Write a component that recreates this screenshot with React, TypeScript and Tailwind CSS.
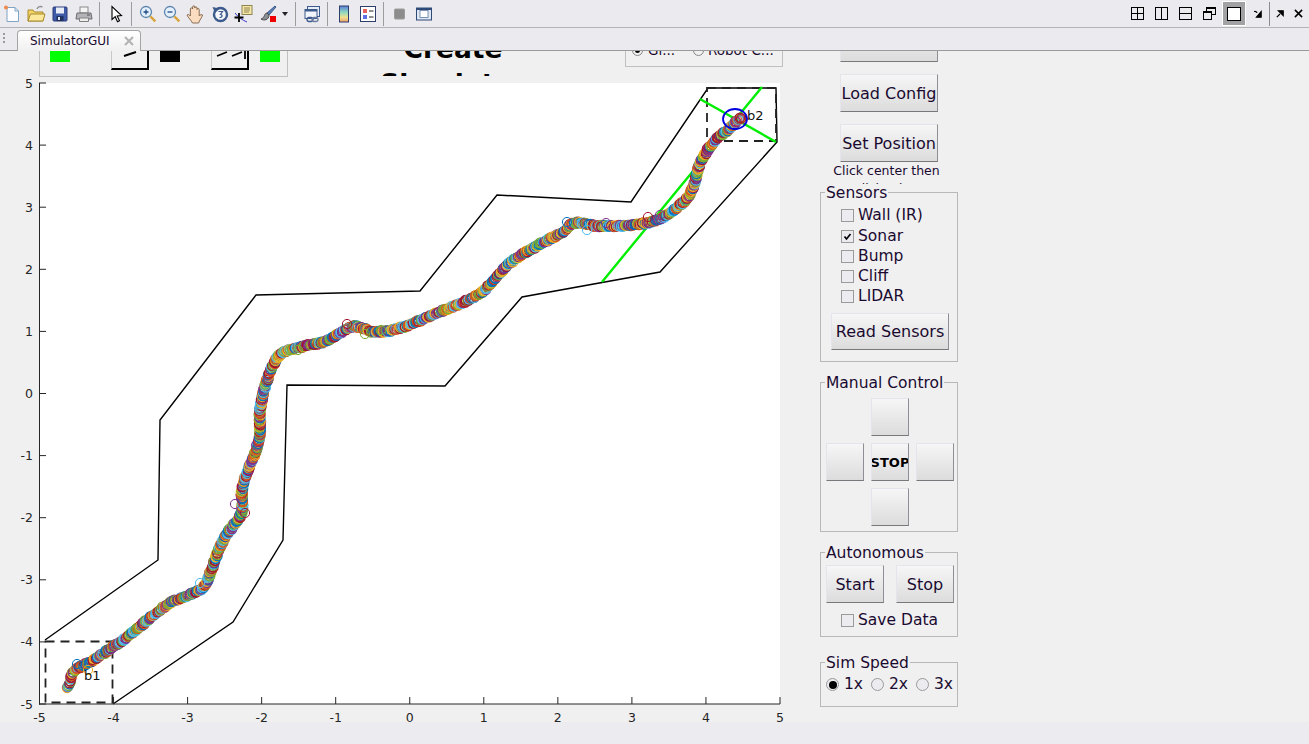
import React from "react";

const font = { fontFamily: '"DejaVu Sans", sans-serif' };

const trace: [number, number][] = [
  [68, 687], [71, 678], [75, 670], [93, 660], [123, 640], [150, 618], [170, 603], [193, 593], [205, 585],
  [215, 560], [225, 537], [241, 514], [242, 490], [247, 473], [257, 447], [260, 430], [260, 410], [265, 387],
  [272, 367], [282, 353], [300, 347], [323, 342], [337, 335], [350, 327], [360, 327], [375, 332], [400, 328],
  [440, 312], [480, 293], [510, 263], [533, 248], [563, 232], [575, 223], [600, 226], [633, 225], [657, 220],
  [677, 208], [692, 190], [700, 163], [713, 143], [730, 128], [741, 117],
];

const matlabColors = ["#0072BD", "#D95319", "#EDB120", "#7E2F8E", "#77AC30", "#4DBEEE", "#A2142F"];

const outliers: [number, number, string][] = [
  [77, 664, "#0072BD"], [88, 670, "#EDB120"], [200, 583, "#4DBEEE"], [235, 504, "#7E2F8E"], [245, 513, "#A2142F"],
  [298, 350, "#77AC30"], [365, 334, "#77AC30"], [381, 330, "#77AC30"], [347, 324, "#A2142F"], [567, 222, "#0072BD"],
  [587, 230, "#4DBEEE"], [606, 223, "#7E2F8E"], [648, 217, "#A2142F"], [660, 215, "#7E2F8E"],
];

function buildPoints() {
  const pts: { x: number; y: number; c: string }[] = [];
  let seed = 7;
  const rnd = () => {
    seed = (seed * 16807) % 2147483647;
    return seed / 2147483647;
  };
  for (let i = 0; i < trace.length - 1; i++) {
    const p0 = trace[Math.max(i - 1, 0)];
    const p1 = trace[i];
    const p2 = trace[i + 1];
    const p3 = trace[Math.min(i + 2, trace.length - 1)];
    const dist = Math.hypot(p2[0] - p1[0], p2[1] - p1[1]);
    const n = Math.max(2, Math.round(dist / 0.8));
    for (let j = 0; j < n; j++) {
      const t = j / n;
      const t2 = t * t;
      const t3 = t2 * t;
      const x = 0.5 * (2 * p1[0] + (p2[0] - p0[0]) * t + (2 * p0[0] - 5 * p1[0] + 4 * p2[0] - p3[0]) * t2 + (3 * p1[0] - p0[0] - 3 * p2[0] + p3[0]) * t3);
      const y = 0.5 * (2 * p1[1] + (p2[1] - p0[1]) * t + (2 * p0[1] - 5 * p1[1] + 4 * p2[1] - p3[1]) * t2 + (3 * p1[1] - p0[1] - 3 * p2[1] + p3[1]) * t3);
      pts.push({ x: x + (rnd() - 0.5) * 2, y: y + (rnd() - 0.5) * 2, c: matlabColors[Math.floor(rnd() * 7)] });
    }
  }
  return pts;
}

const points = buildPoints();
const xTicks = [-5, -4, -3, -2, -1, 0, 1, 2, 3, 4, 5];
const yPos = (v: number) => 83 + (5 - v) * 62.1;
const xPos = (v: number) => 39.5 + (v + 5) * 74.05;

function Plot() {
  return (
    <svg width="800" height="639" viewBox="0 83 800 639" className="block overflow-visible" style={font}>
      <rect x="39" y="83" width="741" height="621" fill="#ffffff" />
      <polyline points="45,640 158,560 160,420 256,295 420,291 497,195 631,202 708,88 776,88 777,142 660,272 522,297 445,386 287,385 283,540 233,622 113,704" fill="none" stroke="#000" strokeWidth="1.4" />
      <rect x="45.5" y="641.5" width="67" height="61" fill="none" stroke="#222" strokeWidth="1.8" strokeDasharray="9 6" />
      <rect x="707" y="88" width="69" height="53" fill="none" stroke="#222" strokeWidth="1.8" strokeDasharray="9 6" />
      <line x1="602" y1="282" x2="762" y2="87" stroke="#00ee00" strokeWidth="2.4" />
      <line x1="700" y1="99" x2="776" y2="142" stroke="#00ee00" strokeWidth="2.4" />
      {points.map((p, i) => (
        <circle key={i} cx={p.x} cy={p.y} r="4.7" fill="none" stroke={p.c} strokeWidth="1.2" />
      ))}
      {outliers.map(([x, y, c], i) => (
        <circle key={i} cx={x} cy={y} r="4.6" fill="none" stroke={c} strokeWidth="1" />
      ))}
      <ellipse cx="735" cy="119" rx="12" ry="10" fill="none" stroke="#0000e0" strokeWidth="1.8" />
      <text x="747" y="120" fontSize="13" fill="#111">b2</text>
      <text x="84" y="680" fontSize="13" fill="#111">b1</text>
      <line x1="39.5" y1="83" x2="39.5" y2="704.5" stroke="#262626" strokeWidth="1" />
      <line x1="39" y1="704" x2="780" y2="704" stroke="#262626" strokeWidth="1" />
      {xTicks.map((v) => (
        <g key={v}>
          <line x1={xPos(v)} y1="704" x2={xPos(v)} y2="697" stroke="#262626" />
          <line x1="39" y1={yPos(v)} x2="46" y2={yPos(v)} stroke="#262626" />
          <text x={xPos(v)} y="722" fontSize="12.5" fill="#262626" textAnchor="middle">
            {v}
          </text>
          <text x="33" y={yPos(v) + 4.5} fontSize="12.5" fill="#262626" textAnchor="end">
            {v}
          </text>
        </g>
      ))}
    </svg>
  );
}

const Cell = ({ w = "w-6", children }: { w?: string; children: React.ReactNode }) => (
  <div className={`${w} h-7 flex items-center justify-center shrink-0`}>{children}</div>
);

const Sep = ({ className }: { className: string }) => <div className={`w-px h-6 bg-[#9c9c9c] shrink-0 ${className}`} />;

const Ico = ({ children }: { children: React.ReactNode }) => (
  <svg width="20" height="20" viewBox="0 0 20 20" fill="none">
    {children}
  </svg>
);

const LayoutIcon = ({ children }: { children: React.ReactNode }) => (
  <svg width="14" height="14" viewBox="0 0 14 14" fill="none" stroke="#000" strokeWidth="1.2" shapeRendering="crispEdges">
    {children}
  </svg>
);

function Toolbar() {
  return (
    <div className="h-[28px] flex items-center bg-[#ebeaee] border-b border-[#b4b4b4] pr-[3px] shrink-0">
      <Cell>
        <Ico>
          <path d="M5 3.5h8l3.5 3.5v10.5H5z" fill="#fdfdff" stroke="#7fa4c4" />
          <path d="M13 3.5V7h3.5" stroke="#7fa4c4" />
          <circle cx="4" cy="3.5" r="2" fill="#f08a4b" />
        </Ico>
      </Cell>
      <Cell>
        <Ico>
          <path d="M2 6h5l1.5 2H17v9H2z" fill="#f3d266" stroke="#a78a2c" />
          <path d="M2 17l2.5-7H19l-2 7z" fill="#fbe89a" stroke="#a78a2c" />
          <path d="M11 5c1-2.5 3.5-3 5.5-2" stroke="#8d8d8d" strokeWidth="1.3" />
        </Ico>
      </Cell>
      <Cell>
        <Ico>
          <rect x="3" y="3" width="14" height="14" rx="1" fill="#3f5ba8" stroke="#2a3b78" />
          <rect x="6" y="3.5" width="8" height="6" fill="#e8ecf6" />
          <rect x="6.5" y="12" width="7" height="5" fill="#20305f" />
          <rect x="8" y="13" width="2" height="3" fill="#dfe4f0" />
        </Ico>
      </Cell>
      <Cell>
        <Ico>
          <rect x="6" y="3" width="8" height="6" fill="#f4f4f4" stroke="#8a8a8a" />
          <path d="M3 9h14l1 6H2z" fill="#b4b4b8" stroke="#6c6c70" />
          <path d="M5.5 14h9v3.5h-9z" fill="#eeeeee" stroke="#808080" />
          <path d="M13 11h3" stroke="#555" />
        </Ico>
      </Cell>
      <Sep className="ml-[3px] mr-[5px]" />
      <Cell>
        <Ico>
          <path d="M5 2.5v13l3.2-2.8 2.3 5 2-1-2.3-4.8 4.3-.4z" fill="#fff" stroke="#000" strokeWidth="1.1" />
        </Ico>
      </Cell>
      <Sep className="ml-[2px] mr-[4px]" />
      <Cell>
        <Ico>
          <circle cx="8" cy="8" r="5.5" fill="#e4f0fb" stroke="#5f86ae" strokeWidth="1.3" />
          <path d="M5.5 8h5M8 5.5v5" stroke="#234a86" strokeWidth="1.3" />
          <path d="M12.3 12.3l5 5" stroke="#d8a33a" strokeWidth="2.4" />
        </Ico>
      </Cell>
      <Cell>
        <Ico>
          <circle cx="8" cy="8" r="5.5" fill="#e4f0fb" stroke="#5f86ae" strokeWidth="1.3" />
          <path d="M5.5 8h5" stroke="#234a86" strokeWidth="1.3" />
          <path d="M12.3 12.3l5 5" stroke="#d8a33a" strokeWidth="2.4" />
        </Ico>
      </Cell>
      <Cell>
        <svg width="20" height="20" viewBox="0 0 20 20">
          <path d="M6.5 19c-1-2.3-4.500-5.500-5.500-8 .6-1.200 2.400-.4 3.400 1V5c0-1.600 2.200-1.600 2.200 0V3c0-1.600 2.200-1.600 2.200 0v1c0-1.600 2.200-1.600 2.200 0v1.500c0-1.400 2.200-1.400 2.200 0V12c.8-1.200 2.800-2 3.400-1-.5 2.200-3.300 5.500-4 8z" fill="#fbdcc0" stroke="#7d6247" strokeWidth="0.9" />
        </svg>
      </Cell>
      <Cell>
        <Ico>
          <circle cx="10.5" cy="10.5" r="6.5" fill="#f4f6fa" stroke="#3c5a8c" strokeWidth="2.4" />
          <path d="M2.5 3l2.5 6L9.5 4.500z" fill="#3c5a8c" />
          <path d="M8.5 7.500h4l-2 3c2 0 2.500 3-1 3" stroke="#3c5a8c" strokeWidth="1.2" />
        </Ico>
      </Cell>
      <Cell>
        <Ico>
          <rect x="8" y="1.5" width="10" height="9" fill="#f4e7a8" stroke="#8e8450" />
          <path d="M10 4h6M10 6h6M10 8h5" stroke="#8e8450" />
          <path d="M1 9c3 4 7 7 12 9" stroke="#2222cc" strokeWidth="0.9" />
          <path d="M5 9v9M0.5 13.5h9" stroke="#000" strokeWidth="1.8" />
        </Ico>
      </Cell>
      <Cell>
        <Ico>
          <path d="M17 2l-8 7 2 2 7-8z" fill="#5a7fb4" stroke="#3c5a8c" />
          <path d="M9 9c-3 0-2 5-6 6 3 2 8 1 8-4z" fill="#8a8f96" stroke="#4a4a4a" />
          <rect x="12" y="12" width="6" height="6" fill="#ee0000" />
        </Ico>
      </Cell>
      <div className="w-[10px] flex justify-center shrink-0">
        <div className="w-0 h-0 border-x-[3px] border-x-transparent border-t-[4px] border-t-[#222]" />
      </div>
      <Sep className="ml-[5px] mr-[4px]" />
      <Cell>
        <Ico>
          <rect x="5.5" y="2.5" width="12" height="10" fill="#e8eef8" stroke="#3c5a8c" />
          <rect x="3" y="5.5" width="12" height="9" fill="#f2f5fb" stroke="#3c5a8c" />
          <path d="M3 5.5h12v2H3z" fill="#3c5a8c" />
          <rect x="5" y="13.5" width="6" height="4" rx="2" fill="none" stroke="#3c5a8c" strokeWidth="1.3" />
          <rect x="10" y="13.5" width="6" height="4" rx="2" fill="none" stroke="#6d7fa0" strokeWidth="1.3" />
        </Ico>
      </Cell>
      <Sep className="ml-[3px] mr-[4px]" />
      <Cell>
        <svg width="20" height="20" viewBox="0 0 20 20">
          <defs>
            <linearGradient id="cbar" x1="0" y1="0" x2="0" y2="1">
              <stop offset="0" stopColor="#5a7fd8" />
              <stop offset="0.4" stopColor="#8fd8c0" />
              <stop offset="0.7" stopColor="#f0e090" />
              <stop offset="1" stopColor="#f0a070" />
            </linearGradient>
          </defs>
          <rect x="5.5" y="2" width="9" height="16" fill="url(#cbar)" stroke="#2f3f6c" />
        </svg>
      </Cell>
      <Cell w="w-[23px]">
        <Ico>
          <rect x="2.5" y="2.5" width="15" height="15" fill="#fff" stroke="#2f3f6c" />
          <rect x="5" y="5" width="4" height="4" fill="#e86060" />
          <rect x="5" y="11" width="4" height="4" fill="#5f6fe8" />
          <path d="M11 7h4.5M11 13h4.5" stroke="#222" />
        </Ico>
      </Cell>
      <Sep className="ml-[4px] mr-[4px]" />
      <Cell>
        <Ico>
          <rect x="4.5" y="5" width="10" height="10" rx="1" fill="#8c8c8c" stroke="#9c9c9c" />
        </Ico>
      </Cell>
      <Cell w="w-[23px]">
        <Ico>
          <rect x="2.5" y="4" width="15" height="12" fill="#dfe7f2" stroke="#2f4a78" />
          <rect x="2.5" y="4" width="15" height="2" fill="#2f4a78" />
          <rect x="6" y="6.5" width="8" height="7" fill="#fff" stroke="#5d7ba3" strokeWidth="0.8" />
        </Ico>
      </Cell>

      <div className="ml-auto flex items-center">
        <Cell>
          <LayoutIcon>
            <rect x="0.5" y="0.5" width="12" height="12" />
            <path d="M6.5 0.5v12M0.5 6.5h12" />
          </LayoutIcon>
        </Cell>
        <Cell>
          <LayoutIcon>
            <rect x="0.5" y="0.5" width="12" height="12" />
            <path d="M6.5 0.5v12" />
          </LayoutIcon>
        </Cell>
        <Cell>
          <LayoutIcon>
            <rect x="0.5" y="0.5" width="12" height="12" />
            <path d="M0.5 6.5h12" />
          </LayoutIcon>
        </Cell>
        <Cell>
          <LayoutIcon>
            <rect x="3.5" y="0.5" width="9" height="7" />
            <path d="M3.5 1.5h9" />
            <rect x="0.5" y="4.5" width="8" height="8" fill="#ebeaee" />
            <path d="M0.5 5.5h8" />
          </LayoutIcon>
        </Cell>
        <Cell>
          <div className="w-6 h-[25px] bg-[#a2a2a4] border border-white flex items-center justify-center">
            <div className="w-3 h-3 box-content bg-white border border-black" />
          </div>
        </Cell>
        <Cell w="w-[23px]">
          <svg width="8" height="8" viewBox="0 0 10 10">
            <path d="M0 2c2-1 3 0 4 1.5M9 2v7H3z" fill="#000" stroke="#000" strokeWidth="1.4" />
          </svg>
        </Cell>
        <div className="w-px h-[24px] bg-[#8c8c8c] shrink-0" />
        <Cell w="w-5">
          <svg width="8" height="8" viewBox="0 0 10 10">
            <path d="M1 9l4-4M3 1h6v6z" fill="#000" stroke="#000" strokeWidth="1.5" />
          </svg>
        </Cell>
        <Cell w="w-4">
          <svg width="9" height="9" viewBox="0 0 10 10">
            <path d="M1 1l8 8M9 1l-8 8" stroke="#000" strokeWidth="1.7" />
          </svg>
        </Cell>
      </div>
    </div>
  );
}

function TabBar() {
  return (
    <div className="h-[23px] flex items-end bg-[#ebeaee] border-b border-[#9a9a9a] shrink-0 relative">
      <div className="w-[17px] h-full flex flex-col justify-center items-center gap-[2px] pb-[3px] pr-[9px]">
        <div className="w-[2px] h-[2px] bg-[#9a9a9a]" />
        <div className="w-[2px] h-[2px] bg-[#9a9a9a]" />
        <div className="w-[2px] h-[2px] bg-[#9a9a9a]" />
      </div>
      <div className="w-[124px] h-[21px] -mb-px flex items-center justify-between pl-[12px] pr-[6px] bg-gradient-to-b from-white to-[#f0f0f0] border border-b-0 border-[#a4a4a4] rounded-t-[4px] text-[12px] text-[#1a0a30]" style={font}>
        <span>SimulatorGUI</span>
        <svg width="10" height="10" viewBox="0 0 10 10">
          <path d="M1 1l8 8M9 1l-8 8" stroke="#b4b4b4" strokeWidth="2.2" />
        </svg>
      </div>
    </div>
  );
}

const Btn = ({ label, className = "", bold = false }: { label?: string; className?: string; bold?: boolean }) => (
  <button
    className={`flex items-center justify-center shrink-0 pt-px bg-gradient-to-b from-[#f6f6f6] to-[#dcdcdc] border border-[#e4e4ea] border-r-[#8e8e94] border-b-[#77777c] whitespace-nowrap overflow-hidden ${
      bold ? "text-[13px] font-bold text-black" : "text-[16px] text-[#1a0a30]"
    } ${className}`}
    style={font}
  >
    {label}
  </button>
);

const Panel = ({ title, className, children }: { title: string; className: string; children: React.ReactNode }) => (
  <fieldset className={`w-[138px] min-w-0 border border-[#b8b8b8] ${className}`} style={font}>
    <legend className="ml-[4px] px-px text-[15.5px] leading-[18px] text-[#1a0a30]">
      <span className="inline-block translate-y-px">{title}</span>
    </legend>
    {children}
  </fieldset>
);

const Check = ({ label, checked = false, className = "" }: { label: string; checked?: boolean; className?: string }) => (
  <div className={`flex items-center gap-[4px] text-[15.5px] text-[#1a0a30] ${className}`}>
    <div className="w-[13px] h-[13px] bg-[#ecebf0] border border-[#9a9a9a] flex items-center justify-center">
      {checked && (
        <svg width="9" height="9" viewBox="0 0 9 9">
          <path d="M1.5 4.5l2 2.5 4-5" fill="none" stroke="#000" strokeWidth="1.7" />
        </svg>
      )}
    </div>
    <span className="leading-[20px]">{label}</span>
  </div>
);

const Radio = ({ label, checked = false }: { label: string; checked?: boolean }) => (
  <div className="flex items-center gap-[5px] w-[45px] shrink-0 text-[15.5px] text-[#1a0a30]">
    <div className="w-[13px] h-[13px] rounded-full bg-[#ecebf0] border border-[#9a9a9a] flex items-center justify-center">
      {checked && <div className="w-[8px] h-[8px] rounded-full bg-black" />}
    </div>
    <span>{label}</span>
  </div>
);

function TopStrip() {
  return (
    <div className="h-[32px] flex items-start overflow-hidden" style={font}>
      <div className="ml-[39px] w-[249px] h-[26px] flex items-start border border-t-0 border-[#c0c0c0] shrink-0 relative">
        <div className="ml-[10px] w-[20px] h-[11px] bg-[#00ff00] shrink-0" />
        <div className="ml-[41px] w-[38px] h-[19px] border-l border-l-[#c8c8c8] border-r-2 border-b-2 border-r-black border-b-black bg-[#f0f0f0] flex items-start justify-center shrink-0">
          <svg width="14" height="8" viewBox="0 0 14 8">
            <path d="M1 5l12-4" stroke="#000" strokeWidth="2" />
          </svg>
        </div>
        <div className="ml-[11px] w-[20px] h-[11px] bg-black shrink-0" />
        <div className="ml-[31px] w-[38px] h-[19px] border-l border-l-[#c8c8c8] border-r-2 border-b-2 border-r-black border-b-black bg-[#f0f0f0] flex items-start justify-center shrink-0">
          <svg width="32" height="9" viewBox="0 0 32 9">
            <path d="M3 5l10-4M18 5l10-4M31 0v8" stroke="#000" strokeWidth="1.8" />
          </svg>
        </div>
        <div className="ml-[11px] w-[20px] h-[11px] bg-[#00ff00] shrink-0" />
      </div>
      <div className="ml-[60px] w-[210px] h-[25px] overflow-hidden text-center font-bold text-[26.5px] leading-[35px] text-black shrink-0">
        <div className="-mt-[20px]">Create</div>
        <div>Simulator</div>
      </div>
      <div className="ml-[67px] w-[158px] h-[16px] border border-t-0 border-[#c0c0c0] flex items-start text-[13.5px] text-[#1a0a30] pl-[6px] shrink-0 overflow-hidden">
        <div className="w-[61px] flex items-center gap-[5px] -mt-[11px]">
          <div className="w-[11px] h-[11px] rounded-full border border-[#888] flex items-center justify-center">
            <div className="w-[5px] h-[5px] rounded-full bg-black" />
          </div>
          <span>Gl...</span>
        </div>
        <div className="flex items-center gap-[4px] -mt-[11px]">
          <div className="w-[11px] h-[11px] rounded-full border border-[#888]" />
          <span>Robot C...</span>
        </div>
      </div>
    </div>
  );
}

function Controls() {
  return (
    <div className="w-[138px] flex flex-col shrink-0" style={font}>
      <div className="ml-5 flex flex-col gap-3 -mt-[27px]">
        <Btn className="w-[98px] h-[38px]" label="" />
        <Btn className="w-[98px] h-[38px]" label="Load Config" />
        <Btn className="w-[98px] h-[38px]" label="Set Position" />
      </div>
      <div className="h-[22px] overflow-hidden text-center text-[12.5px] leading-[18px] text-[#1a0a30] pr-[5px]">
        Click center then
        <br />
        click edge
      </div>
      <Panel title="Sensors" className="h-[179px] -mt-px">
        <div className="pl-[20px] pt-[4px]">
          <Check label="Wall (IR)" />
          <Check label="Sonar" checked className="mt-px" />
          <Check label="Bump" />
          <Check label="Cliff" />
          <Check label="LIDAR" />
        </div>
        <div className="flex justify-center pl-[2px] mt-[7px]">
          <Btn className="w-[118px] h-[37px]" label="Read Sensors" />
        </div>
      </Panel>
      <Panel title="Manual Control" className="h-[159px] mt-[11px]">
        <div className="grid grid-cols-[38px_38px_38px] gap-[7px] justify-center pl-[2px] pt-[7px]">
          <div />
          <Btn className="w-[38px] h-[38px]" />
          <div />
          <Btn className="w-[38px] h-[38px]" />
          <Btn className="w-[38px] h-[38px]" label="STOP" bold />
          <Btn className="w-[38px] h-[38px]" />
          <div />
          <Btn className="w-[38px] h-[38px]" />
          <div />
        </div>
      </Panel>
      <Panel title="Autonomous" className="h-[94px] mt-[11px]">
        <div className="flex justify-center gap-3 pl-[2px] pt-[4px]">
          <Btn className="w-[58px] h-[38px]" label="Start" />
          <Btn className="w-[58px] h-[38px]" label="Stop" />
        </div>
        <Check label="Save Data" className="pl-[20px] mt-[7px]" />
      </Panel>
      <Panel title="Sim Speed" className="h-[54px] mt-[16px]">
        <div className="flex pl-[5px] pt-[2px]">
          <Radio label="1x" checked />
          <Radio label="2x" />
          <Radio label="3x" />
        </div>
      </Panel>
    </div>
  );
}

export default function App() {
  return (
    <div className="w-[1309px] h-[744px] flex flex-col overflow-hidden bg-[#f0f0f0]">
      <Toolbar />
      <TabBar />
      <div className="h-[671px] flex overflow-hidden">
        <div className="w-[820px] shrink-0">
          <TopStrip />
          <Plot />
        </div>
        <Controls />
      </div>
      <div className="flex-1 bg-[#ecebef]" />
    </div>
  );
}
